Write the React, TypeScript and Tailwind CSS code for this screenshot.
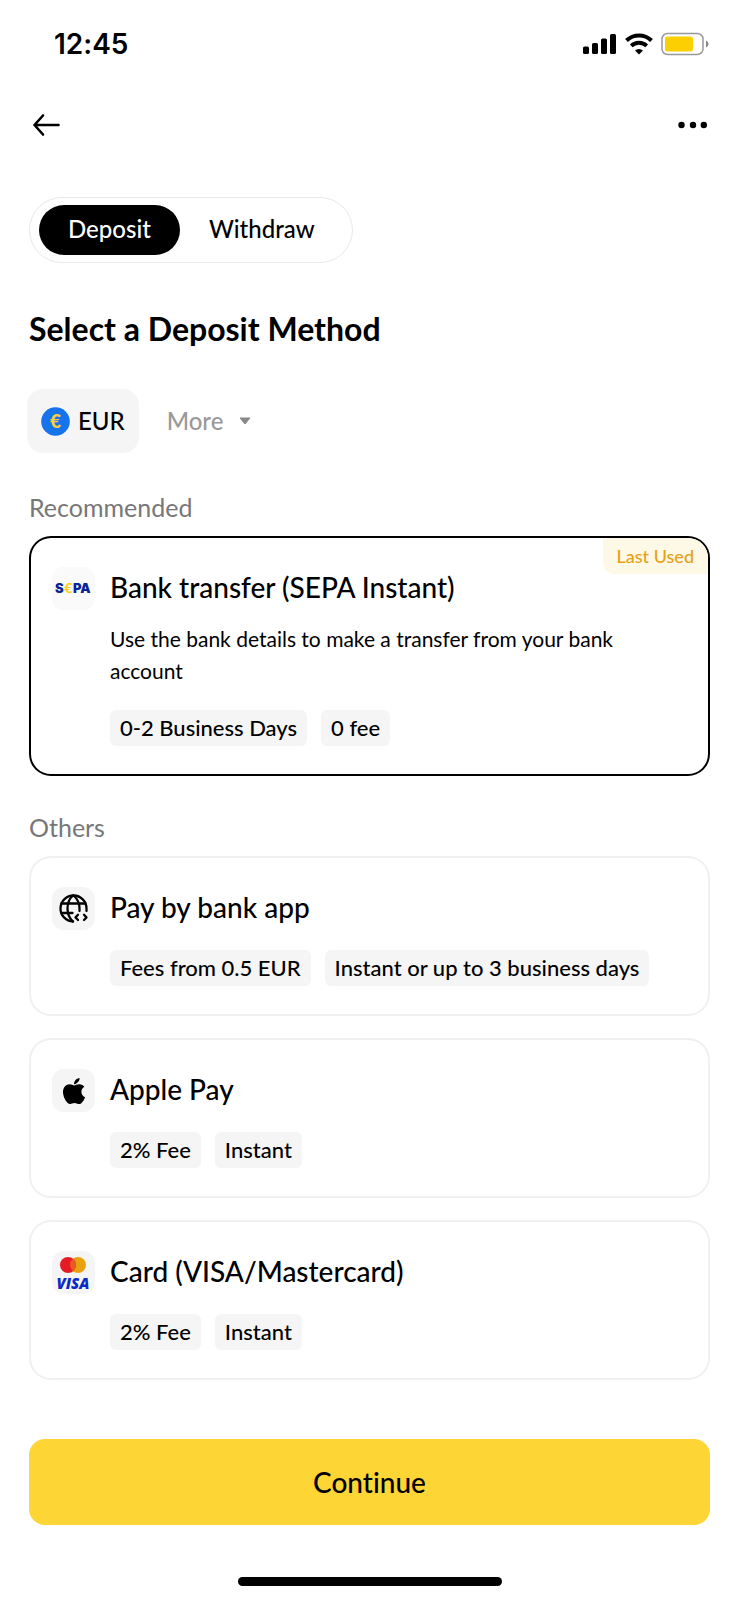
import { useState } from 'react'
import type { ReactNode } from 'react'
import { FaApple } from 'react-icons/fa'

type Method = {
  id: string
  name: string
  description?: string
  tags: string[]
  icon: ReactNode
  lastUsed?: boolean
}

const SepaLogo = () => (
  <svg viewBox="0 0 43 43" className="w-full h-full rounded-xl bg-[#fafafa]" aria-hidden="true">
    <g fontFamily="Inter, 'Liberation Sans', sans-serif" fontSize="13" fontWeight="900" fill="#0a2396">
      <text x="3" y="26">S</text>
      <text x="12" y="26" fill="#fccb1c" fontWeight="600">€</text>
      <text x="21" y="26">PA</text>
    </g>
  </svg>
)

const GlobeCodeIcon = () => (
  <svg viewBox="0 0 43 43" className="w-full h-full" fill="none" stroke="#000" strokeWidth="2.300" strokeLinecap="round" strokeLinejoin="round" aria-hidden="true">
    <path d="M34.500 24V21.500a13 13 0 1 0-13.500 13" />
    <path d="M9.500 16.500h24M9.500 26h11" />
    <path d="M21 34.500c-3.500-3-5.500-8-5.500-13s2-10 5.500-13M21.500 8.500c3.500 3 6 8 6 13v2.500" />
    <path d="M26 27.800l-2.500 2.600 2.500 2.600M32 27.800l2.500 2.600-2.500 2.600" />
  </svg>
)

const CardLogo = () => (
  <svg viewBox="0 0 43 43" className="w-full h-full" aria-hidden="true">
    <circle cx="26" cy="14" r="8" fill="#e9a20f" />
    <circle cx="16" cy="14" r="8" fill="#e61c24" />
    <path d="M21 7.750a8 8 0 0 1 0 12.500a8 8 0 0 1 0-12.500z" fill="#ea5b24" />
    <text x="4.500" y="37.500" fontFamily="'Open Sans', sans-serif" fontSize="15" fontWeight="800" fontStyle="italic" fill="#0a2bc4">VISA</text>
  </svg>
)

const recommended: Method[] = [
  {
    id: 'sepa',
    name: 'Bank transfer (SEPA Instant)',
    description: 'Use the bank details to make a transfer from your bank account',
    tags: ['0-2 Business Days', '0 fee'],
    icon: <SepaLogo />,
    lastUsed: true,
  },
]

const others: Method[] = [
  { id: 'bank-app', name: 'Pay by bank app', tags: ['Fees from 0.5 EUR', 'Instant or up to 3 business days'], icon: <GlobeCodeIcon /> },
  { id: 'apple-pay', name: 'Apple Pay', tags: ['2% Fee', 'Instant'], icon: <FaApple className="w-[30px] h-[30px]" /> },
  { id: 'card', name: 'Card (VISA/Mastercard)', tags: ['2% Fee', 'Instant'], icon: <CardLogo /> },
]

const StatusBar = () => (
  <div className="flex items-center justify-between h-[88px] pl-[54px] pr-[30px]">
    <span className="font-[Inter,sans-serif] text-[28px] leading-8 font-semibold">12:45</span>
    <div className="flex items-center gap-2">
      <svg width="34" height="22" viewBox="0 0 34 22" aria-hidden="true">
        <rect x="0" y="13.500" width="6" height="7.500" rx="1.500" />
        <rect x="9" y="10" width="6" height="11" rx="1.500" />
        <rect x="18" y="5.500" width="6" height="15.500" rx="1.500" />
        <rect x="27" y="1" width="6" height="20" rx="1.500" />
      </svg>
      <svg width="28" height="22" viewBox="0 0 28 22" fill="none" stroke="#000" strokeWidth="4" aria-hidden="true">
        <path d="M1.500 7.500a18 18 0 0 1 25 0" />
        <path d="M6.300 12.900a11.200 11.200 0 0 1 15.400 0" />
        <path d="M14 21.500l-4-4a6 6 0 0 1 8 0z" fill="#000" stroke="none" />
      </svg>
      <svg width="48" height="24" viewBox="0 0 48 24" aria-hidden="true">
        <rect x="1" y="1.500" width="41" height="21" rx="5.500" fill="none" stroke="#999" strokeWidth="1.500" />
        <rect x="4" y="4.500" width="28" height="15" rx="2.500" fill="#fccf03" />
        <path d="M45 8.500c3.300 1.500 3.300 5.500 0 7z" fill="#888" />
      </svg>
    </div>
  </div>
)

const MethodCard = ({ method, selected, onSelect }: { method: Method; selected: boolean; onSelect: () => void }) => (
  <label
    className={`relative block rounded-[22px] overflow-hidden cursor-pointer px-[23px] pt-[31px] pb-[30px] ring-inset ${
      selected ? 'ring-2 ring-black' : 'ring-2 ring-[#f0f0f0]'
    }`}
  >
    <input type="radio" name="method" value={method.id} checked={selected} onChange={onSelect} className="sr-only" />
    {method.lastUsed && (
      <span className="absolute top-0.5 right-0.5 rounded-bl-xl rounded-tr-[20px] bg-[#fef8e6] px-[14px] text-[18px] leading-9 font-medium text-[#e6a117]">
        Last Used
      </span>
    )}
    <div className="flex gap-[15px]">
      <div className="w-[43px] h-[43px] shrink-0 rounded-xl bg-[#f5f5f5] flex items-center justify-center">
        {method.icon}
      </div>
      <div className="flex-1 min-w-0">
        <h3 className="text-[28px] leading-10 font-medium">{method.name}</h3>
        {method.description && <p className="mt-4 mr-14 text-[21px] leading-8">{method.description}</p>}
        <div className="flex flex-wrap gap-[14px] mt-[23px]">
          {method.tags.map((tag) => (
            <span key={tag} className="rounded-md bg-[#f5f5f5] px-[10px] text-[22px] leading-9 font-medium">
              {tag}
            </span>
          ))}
        </div>
      </div>
    </div>
  </label>
)

const App = () => {
  const [tab, setTab] = useState('Deposit')
  const [methodId, setMethodId] = useState('sepa')

  return (
    <div className="min-h-screen flex flex-col bg-white text-black font-[Lato,sans-serif] [font-variant-ligatures:none]">
      <StatusBar />

      {/* Nav */}
      <header className="flex items-center justify-between h-[74px] px-8">
        <button aria-label="Back">
          <svg width="30" height="24" viewBox="0 0 30 24" fill="none" stroke="#000" strokeWidth="2.600" strokeLinecap="round" strokeLinejoin="round">
            <path d="M26.500 12H2.500M11 2.500L2.500 12l8.500 9.500" />
          </svg>
        </button>
        <button aria-label="More options">
          <svg width="30" height="8" viewBox="0 0 30 8">
            <circle cx="4.500" cy="4" r="3.200" />
            <circle cx="16" cy="4" r="3.200" />
            <circle cx="26.800" cy="4" r="3.200" />
          </svg>
        </button>
      </header>

      <main className="px-[29px] pt-[35px]">
        <div className="inline-flex items-center rounded-full border border-[#e8e8e8] pl-[9px] pr-2 py-[7px]">
          {['Deposit', 'Withdraw'].map((item) => (
            <button
              key={item}
              onClick={() => setTab(item)}
              className={`h-[50px] rounded-full px-[29px] pb-0.5 text-2xl font-medium ${tab === item ? 'bg-black text-white' : ''}`}
            >
              {item}
            </button>
          ))}
        </div>

        <h1 className="mt-[46px] text-[32px] leading-10 font-bold">Select a Deposit Method</h1>

        <div className="flex items-center mt-10 -ml-0.5">
          <button className="flex items-center gap-2 h-16 rounded-2xl bg-[#f5f5f5] px-[14px] text-2xl font-medium">
            <svg width="29" height="29" viewBox="0 0 29 29" aria-hidden="true">
              <circle cx="14.500" cy="14.500" r="14.300" fill="#1573eb" />
              <text x="14.500" y="21" textAnchor="middle" fontFamily="Lato, sans-serif" fontSize="19" fontWeight="900" fill="#fccf3c">€</text>
            </svg>
            EUR
          </button>
          <button className="flex items-center gap-4 h-16 px-7 text-2xl font-medium text-[#999]">
            More
            <svg width="12" height="8" viewBox="0 0 12 8" fill="#888" stroke="#888" strokeLinejoin="round" aria-hidden="true">
              <path d="M1 1h10L6 7z" />
            </svg>
          </button>
        </div>

        <h2 className="mt-[38px] text-[25px] leading-8 text-[#777]">Recommended</h2>
        <div className="mt-[13px]">
          {recommended.map((method) => (
            <MethodCard key={method.id} method={method} selected={methodId === method.id} onSelect={() => setMethodId(method.id)} />
          ))}
        </div>

        <h2 className="mt-[35px] text-[25px] leading-8 text-[#777]">Others</h2>
        <div className="mt-[13px] flex flex-col gap-[22px]">
          {others.map((method) => (
            <MethodCard key={method.id} method={method} selected={methodId === method.id} onSelect={() => setMethodId(method.id)} />
          ))}
        </div>
      </main>

      <footer className="mt-[59px] px-[29px]">
        <button className="w-full h-[86px] rounded-2xl bg-[#fdd535] text-[28px] font-medium">Continue</button>
        <div className="mx-auto mt-[52px] mb-[14px] h-[9px] w-[264px] rounded-full bg-black" />
      </footer>
    </div>
  )
}

export default App
